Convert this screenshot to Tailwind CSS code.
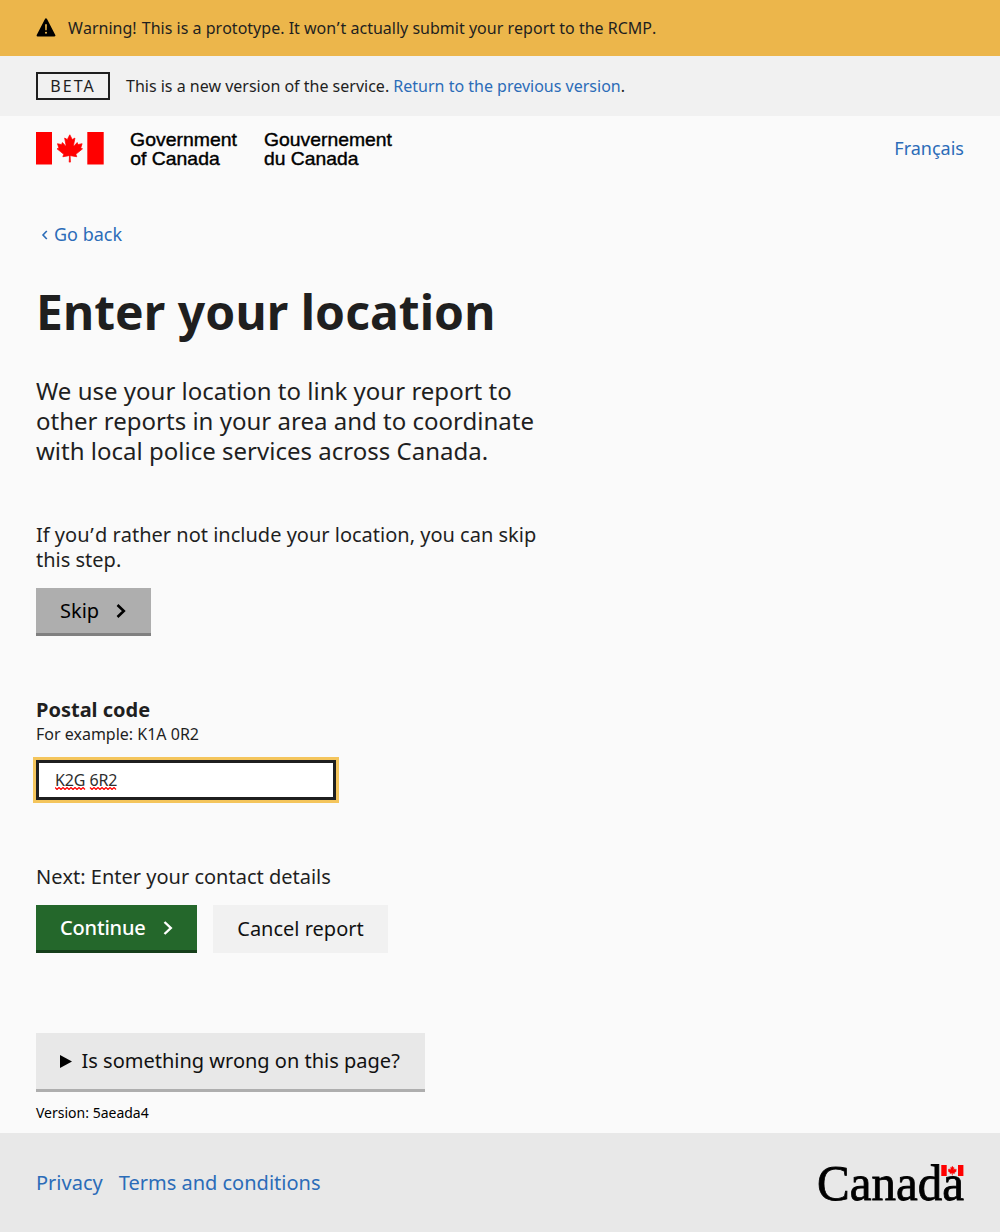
<!DOCTYPE html>
<html lang="en">
<head>
<meta charset="utf-8">
<title>Enter your location</title>
<script src="https://cdn.jsdelivr.net/npm/@tailwindcss/browser@4"></script>
</head>
<body class="flex min-h-[1232px] flex-col bg-[#fafafa] font-['Noto_Sans',sans-serif] text-[#1f1f1f]">
<svg class="hidden">
  <symbol id="leaf" viewBox="-1930 -2030 3860 4060"><path d="m-90 2030 45-863a95 95 0 0 0-111-98l-859 151 116-320a65 65 0 0 0-20-73l-941-762 212-99a65 65 0 0 0 34-79l-186-572 542 115a65 65 0 0 0 73-38l105-247 423 454a65 65 0 0 0 111-57l-204-1052 327 189a65 65 0 0 0 91-27l332-652 332 652a65 65 0 0 0 91 27l327-189-204 1052a65 65 0 0 0 111 57l423-454 105 247a65 65 0 0 0 73 38l542-115-186 572a65 65 0 0 0 34 79l212 99-941 762a65 65 0 0 0-20 73l116 320-859-151a95 95 0 0 0-111 98l45 863z"/></symbol>
</svg>
<div class="flex h-14 items-center bg-[#ecb64b] px-9 text-base">
  <svg class="mr-3 h-5 w-5" viewBox="0 0 20 20"><path d="M10 1.3 18.4 17.4H1.6Z" stroke="#000" stroke-width="2" stroke-linejoin="round"/><path d="M9.1 6.2h1.8l-.2 6H9.3z" fill="#ecb64b"/><circle cx="10" cy="14.8" r="1.05" fill="#ecb64b"/></svg>
  <p class="tracking-[0.01px] [font-kerning:none]"><span class="mr-px">Warning!</span> This is a prototype. It won<span class="ml-[0.5px] tracking-[1px]">’</span>t actually submit your report to the RCMP.</p>
</div>
<div class="flex h-15 items-center bg-[#f1f1f1] px-9 text-base">
  <span class="mr-4 flex h-7 w-[74px] items-center justify-center border-2 border-[#1f1f1f] tracking-[2px]">BETA</span>
  <p>This is a new version of the service. <a class="text-[#2b6cb8]">Return to the previous version</a>.</p>
</div>
<header class="flex h-[66px] items-center justify-between px-9">
  <svg class="h-[34px] w-[360px] overflow-visible" viewBox="0 0 360 34">
    <path fill="#f00" d="M0 0h16v32.4H0zM51.3 0h16.4v32.4H51.3z"/>
    <use href="#leaf" x="20.6" y="2.2" width="26.4" height="28.4" fill="#f00" stroke="#f00" stroke-width="110"/>
    <g font-family="Liberation Sans, Arial, sans-serif" font-size="18.4" stroke="#000" stroke-width=".4">
      <text x="94.1" y="14" textLength="106.8" lengthAdjust="spacingAndGlyphs">Government</text><text x="94.3" y="32.6" textLength="89.4" lengthAdjust="spacingAndGlyphs">of Canada</text>
      <text x="228" y="14" textLength="128" lengthAdjust="spacingAndGlyphs">Gouvernement</text><text x="228" y="32.6" textLength="94.4" lengthAdjust="spacingAndGlyphs">du Canada</text>
    </g>
  </svg>
  <a class="pb-0.5 text-lg text-[#2b6cb8]">Français</a>
</header>
<main class="flex grow flex-col items-start px-9 pt-[38px]">
  <a class="flex items-center pl-1 text-lg leading-7 text-[#2b6cb8]"><svg class="mt-0.5 mr-[5px] h-3 w-[9px]" viewBox="0 0 9 12" fill="none" stroke="currentColor" stroke-width="1.6"><path d="M6.8 2 3 6l3.8 4"/></svg>Go back</a>
  <h1 class="mt-[34px] text-5xl leading-[60px] font-bold tracking-[0.06px]">Enter your location</h1>
  <p class="mt-[34px] w-[510px] text-2xl leading-[30px] tracking-[0.01px]">We use your location to link your report to other reports in your area and to coordinate with local police services across Canada.</p>
  <p class="mt-14 w-[510px] text-xl leading-[25px] [font-kerning:none]">If you<span class="ml-[0.6px] tracking-[1.4px]">’</span>d rather not include your location, you can skip this step.</p>
  <button class="mt-4 flex h-12 w-[115px] items-center border-b-3 border-[#808080] bg-[#aeaeae] pl-6 text-xl text-black">Skip<svg class="ml-4 h-4 w-3" viewBox="0 0 12 16" fill="none" stroke="currentColor" stroke-width="2.6"><path d="M2.5 2 8.8 8l-6.3 6"/></svg></button>
  <label class="mt-[61px] text-xl leading-[25px] font-bold">Postal code</label>
  <p class="text-base leading-6">For example: K1A 0R2</p>
  <div role="textbox" class="mt-[14px] flex h-10 w-[300px] items-center border-3 border-[#1f1f1f] bg-white px-4 text-base text-[#2e2e2e] outline-3 outline-[#f4c55c]">
    <div class="relative tracking-[-0.1px]">K2G 6R2
      <svg class="absolute top-[19px] left-0 h-[3px] w-[63px]" viewBox="0 0 63 3" fill="none" stroke="#f00" stroke-width="1.2"><path d="M0 .5 2 2.5l2-2 2 2 2-2 2 2 2-2 2 2 2-2 2 2 2-2 2 2 2-2 2 2 2-2 2 2M35 .5l2 2 2-2 2 2 2-2 2 2 2-2 2 2 2-2 2 2 2-2 2 2 2-2 2 2"/></svg>
    </div>
  </div>
  <p class="mt-16 text-xl leading-[25px] [font-kerning:none]">Next: Enter your contact details</p>
  <div class="mt-4 flex gap-4">
    <button class="flex h-12 w-[161px] items-center border-b-3 border-[#153e1a] bg-[#24672b] pl-6 text-xl font-medium tracking-[-0.18px] text-white">Continue<svg class="ml-4 h-4 w-3" viewBox="0 0 12 16" fill="none" stroke="currentColor" stroke-width="2.4"><path d="M2.5 2 8.8 8l-6.3 6"/></svg></button>
    <a class="flex h-12 w-[175px] items-center justify-center bg-[#f1f1f1] text-xl text-[#111]">Cancel report</a>
  </div>
  <div class="mt-20 flex h-[59px] w-[389px] items-center border-b-3 border-[#aeaeae] bg-[#e8e8e8] pl-6 text-xl text-[#111]"><svg class="mr-[9.5px] h-[13px] w-3" viewBox="0 0 12 13"><path d="M0 0 12 6.5 0 13z"/></svg>Is something wrong on this page?</div>
  <p class="mt-[11px] text-sm text-black">Version: 5aeada4</p>
</main>
<footer class="flex h-[99px] items-center justify-between bg-[#e8e8e8] px-9">
  <nav class="flex gap-4 text-xl text-[#2b6cb8]"><a>Privacy</a><a>Terms and conditions</a></nav>
  <svg class="h-10 w-[148px] overflow-visible" viewBox="0 0 148 40">
    <text x="1" y="36.5" font-family="Liberation Serif, Times New Roman, serif" font-size="50.5" textLength="147" lengthAdjust="spacingAndGlyphs" stroke="#000" stroke-width=".8">Canada</text>
    <path fill="#e8e8e8" d="M124.8 1h23v12h-23z"/>
    <path fill="#f00" d="M125.3 2h5.4v11h-5.4zM142 2h5.4v11H142z"/>
    <use href="#leaf" x="131.8" y="3" width="9" height="9.5" fill="#f00" stroke="#f00" stroke-width="150"/>
  </svg>
</footer>
</body>
</html>
